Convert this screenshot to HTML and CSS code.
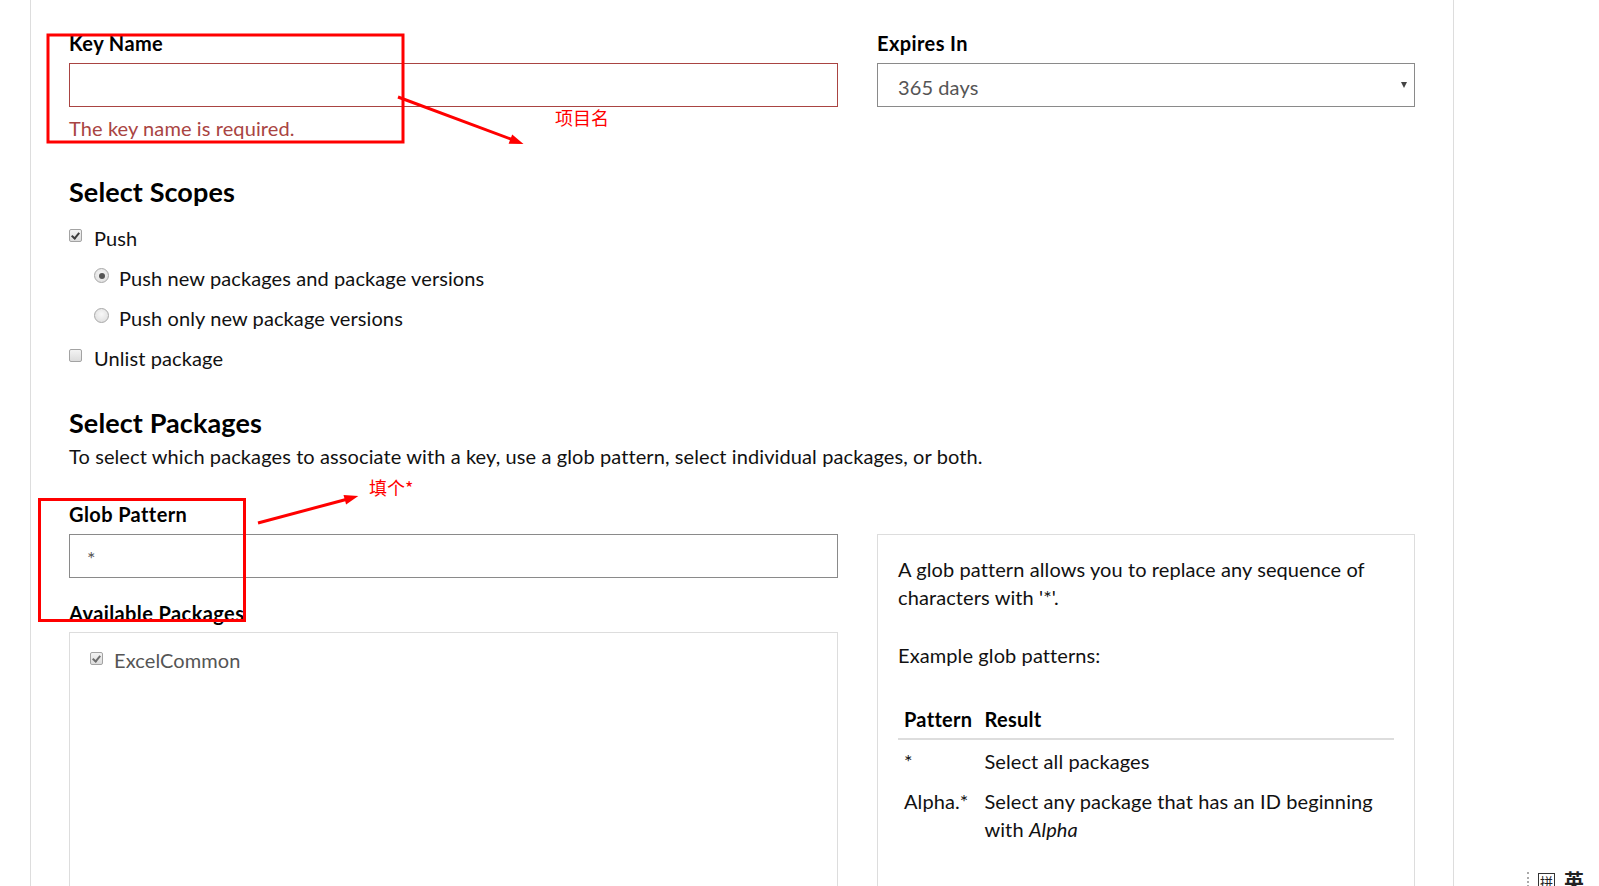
FILE: index.html
```html
<!DOCTYPE html>
<html lang="en">
<head>
<meta charset="utf-8">
<title>Create API Key</title>
<link rel="stylesheet" href="styles.css">
</head>
<body>
<div class="page">
  <div class="cols">
    <div class="field">
      <label class="lbl">Key Name</label>
      <div class="input invalid"></div>
      <div class="err-msg">The key name is required.</div>
    </div>
    <div class="field">
      <label class="lbl">Expires In</label>
      <div class="input select">365 days<span class="caret"></span></div>
    </div>
  </div>

  <h2 class="heading">Select Scopes</h2>
  <div class="scopes">
    <div class="opt"><span class="chk on"></span>Push</div>
    <div class="opt sub"><span class="radio on"></span>Push new packages and package versions</div>
    <div class="opt sub"><span class="radio"></span>Push only new package versions</div>
    <div class="opt"><span class="chk"></span>Unlist package</div>
  </div>

  <h2 class="heading pk">Select Packages</h2>
  <p class="desc">To select which packages to associate with a key, use a glob pattern, select individual packages, or both.</p>

  <div class="cols lower">
    <div class="field">
      <label class="lbl">Glob Pattern</label>
      <div class="input">*</div>
      <label class="lbl avail">Available Packages</label>
      <div class="pkg-box">
        <div class="opt pkg"><span class="chk on dim"></span>ExcelCommon</div>
      </div>
    </div>
    <div class="info">
      <p class="info-p">A glob pattern allows you to replace any sequence of characters with '*'.</p>
      <p class="info-p">Example glob patterns:</p>
      <table class="gtable">
        <thead><tr><th>Pattern</th><th>Result</th></tr></thead>
        <tbody>
          <tr><td>*</td><td>Select all packages</td></tr>
          <tr><td>Alpha.*</td><td>Select any package that has an ID beginning with <i>Alpha</i></td></tr>
        </tbody>
      </table>
    </div>
  </div>
</div>

<svg class="annot" width="1599" height="886" viewBox="0 0 1599 886">
  <rect x="48" y="35" width="355" height="107" fill="none" stroke="#ff0000" stroke-width="3"/>
  <rect x="39.5" y="499.5" width="205" height="121" fill="none" stroke="#ff0000" stroke-width="3"/>
  <line x1="398" y1="97" x2="512" y2="139.5" stroke="#ff0000" stroke-width="3"/>
  <polygon points="523.5,144 508.6,143.8 512.2,134.4" fill="#ff0000"/>
  <line x1="258" y1="523" x2="346" y2="499.5" stroke="#ff0000" stroke-width="3"/>
  <polygon points="358.3,496 346.1,504.5 343.5,494.9" fill="#ff0000"/>
</svg>
<div class="note note1">项目名</div>
<div class="note note2">填个*</div>

<div class="ime"><span class="ime-dots"></span><span class="ime-pin">拼</span><span class="ime-en">英</span></div>
</body>
</html>
```
FILE: styles.css
```css
html, body {
  margin: 0;
  padding: 0;
  overflow: hidden;
  background: #fff;
}
body {
  font-family: "Lato", "Noto Sans", sans-serif;
  font-size: 20px;
  line-height: 28px;
  letter-spacing: 0.1px;
  color: #111;
  position: relative;
  width: 1599px;
  height: 886px;
}
.page {
  margin-left: 30px;
  width: 1424px;
  min-height: 886px;
  box-sizing: border-box;
  border-left: 1px solid #ddd;
  border-right: 1px solid #ddd;
  padding: 29px 38px 0;
}
.cols {
  display: grid;
  grid-template-columns: 769px 538px;
  column-gap: 39px;
  align-items: start;
}
.lbl {
  display: block;
  font-weight: 700;
  letter-spacing: 0.4px;
  color: #000;
  margin-bottom: 6px;
}
.input {
  box-sizing: border-box;
  height: 44px;
  border: 1px solid #8a8a8a;
  padding: 2px 17px 0;
  line-height: 42px;
  color: #555;
  background: #fff;
}
.input.invalid {
  border-color: #a94442;
}
.err-msg {
  margin-top: 7px;
  color: #a94442;
}
.select {
  position: relative;
  padding-left: 20px;
}
.caret {
  position: absolute;
  right: 7px;
  top: 18px;
  width: 0;
  height: 0;
  border-left: 3.5px solid transparent;
  border-right: 3.5px solid transparent;
  border-top: 6px solid #444;
}
.heading {
  margin: 32px 0 0;
  font-size: 27px;
  line-height: 36px;
  font-weight: 700;
  letter-spacing: 0.1px;
  color: #000;
}
.heading.pk {
  margin-top: 33px;
}
.scopes {
  margin-top: 14px;
}
.opt {
  display: flex;
  align-items: flex-start;
  height: 28px;
  margin-bottom: 12px;
  color: #111;
}
.opt.sub {
  padding-left: 25px;
}
.scopes .opt:last-child {
  margin-bottom: 0;
}
.chk {
  flex: none;
  box-sizing: border-box;
  width: 13px;
  height: 13px;
  margin-top: 5px;
  margin-right: 12px;
  border: 1px solid #a3a3a3;
  border-radius: 2px;
  background: linear-gradient(#f3f3f3, #dcdcdc);
  position: relative;
}
.chk.on::after {
  content: "";
  position: absolute;
  left: 3px;
  top: 1px;
  width: 3px;
  height: 6px;
  border-right: 2px solid #3c3c3c;
  border-bottom: 2px solid #3c3c3c;
  transform: rotate(40deg);
}
.chk.dim.on::after {
  border-color: #6e6e6e;
}
.radio {
  flex: none;
  box-sizing: border-box;
  width: 15px;
  height: 15px;
  margin-top: 4px;
  margin-right: 10px;
  border: 1px solid #a8a8a8;
  border-radius: 50%;
  background: radial-gradient(circle at 50% 40%, #f8f8f8, #dadada);
  position: relative;
}
.radio.on::after {
  content: "";
  position: absolute;
  left: 3.5px;
  top: 3.5px;
  width: 6px;
  height: 6px;
  border-radius: 50%;
  background: #555;
}
.desc {
  margin: 1px 0 0;
  color: #111;
}
.lower {
  margin-top: 30px;
}
.avail {
  margin-top: 21px;
  margin-bottom: 5px;
}
.pkg-box {
  box-sizing: border-box;
  height: 320px;
  border: 1px solid #ddd;
  padding: 13px 20px;
}
.opt.pkg {
  color: #555;
  margin: 0;
}
.opt.pkg .chk {
  margin-top: 6px;
  margin-right: 11px;
}
.info {
  margin-top: 34px;
  box-sizing: border-box;
  height: 400px;
  border: 1px solid #ddd;
  padding: 20px 20px;
  color: #111;
}
.info-p {
  margin: 0 0 30px;
}
.gtable {
  width: 100%;
  border-collapse: collapse;
  margin-top: -1px;
}
.gtable th {
  text-align: left;
  font-weight: 700;
  letter-spacing: 0.3px;
  color: #000;
  padding: 7px 6px 5px;
  border-bottom: 2px solid #ddd;
  white-space: nowrap;
}
.gtable td {
  vertical-align: top;
  padding: 7px 6px 5px;
}
.gtable td:first-child {
  width: 1px;
  white-space: nowrap;
}
.annot {
  position: absolute;
  left: 0;
  top: 0;
  pointer-events: none;
}
.note {
  position: absolute;
  font-family: "Noto Sans CJK SC", sans-serif;
  font-size: 18px;
  line-height: 18px;
  letter-spacing: 0;
  color: #ff0000;
}
.note1 {
  left: 555px;
  top: 108px;
}
.note2 {
  left: 369px;
  top: 478px;
}
.ime {
  position: absolute;
  left: 1527px;
  top: 871px;
  display: flex;
  align-items: flex-start;
  font-family: "Noto Sans CJK SC", sans-serif;
  letter-spacing: 0;
  color: #222;
}
.ime-dots {
  width: 0;
  height: 15px;
  border-left: 2px dotted #aaa;
  margin-right: 9px;
  margin-top: 1px;
}
.ime-pin {
  box-sizing: border-box;
  width: 17px;
  height: 17px;
  border: 1px solid #333;
  font-size: 13px;
  line-height: 15px;
  text-align: center;
  margin-top: 2px;
  margin-right: 9px;
}
.ime-en {
  font-size: 20px;
  line-height: 20px;
  font-weight: 700;
}
```
